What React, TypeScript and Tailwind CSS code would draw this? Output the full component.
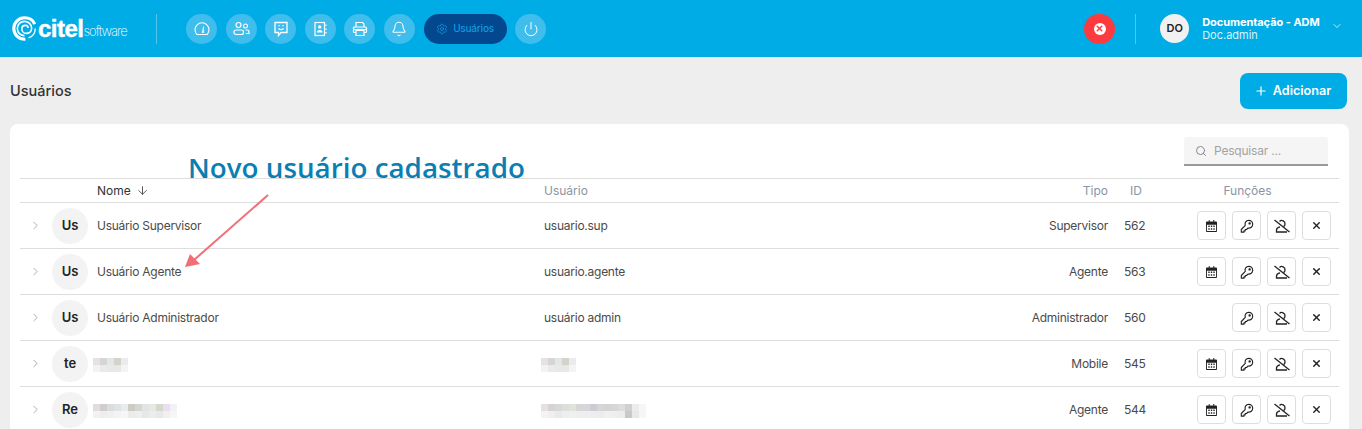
import React from 'react';
import { ArrowDown, Bell, ChevronDown, ChevronRight, Plus, Power, Search, Settings, X } from 'lucide-react';

const Swirl = () => (
  <svg width="25" height="25" viewBox="0 0 28 28" fill="none" stroke="white">
    <path d="M15 26C8 26.500 2 21 2 14S7.500 2 14 2c5 0 9.500 2.500 11.500 7" strokeWidth="3.500" />
    <path d="M26 14c0 5-3 9-7.500 10.500" strokeWidth="1.500" />
    <path d="M14 22c-4.500 0-8-3.500-8-8s3.500-8 8-8 8 3.500 8 7.500-3 6-6 6-5-2.500-5-5 1.500-4 4-4 3 1.500 3 3" strokeWidth="1.800" />
  </svg>
);

const GaugeIcon = () => (
  <svg width="16" height="16" viewBox="0 0 16 16" fill="none" stroke="white" strokeWidth="1.100">
    <path d="M2.800 13.500a7 7 0 1 1 10.400 0z" strokeLinejoin="round" />
    <path d="M8 12L9.500 5.500l.2 6.500" fill="white" strokeWidth="0.500" />
  </svg>
);

const UsersIcon = () => (
  <svg width="17" height="16" viewBox="0 0 17 16" fill="none" stroke="white" strokeWidth="1.200">
    <circle cx="5.500" cy="4" r="2.500" />
    <rect x="1" y="9" width="9.500" height="4.500" rx="2" />
    <circle cx="12.500" cy="5" r="2" />
    <path d="M12.500 9h1.500a2 2 0 0 1 2 2v1.500h-3" />
  </svg>
);

const ChatSmile = () => (
  <svg width="16" height="16" viewBox="0 0 16 16" fill="none" stroke="white" strokeWidth="1.300">
    <path d="M2 1.500h12v10H8l-2.500 3v-3H2z" />
    <path d="M5.500 7.500c1.300 1.300 3.700 1.300 5 0" />
    <path d="M6 4v1.200M10 4v1.200" />
  </svg>
);

const BookIcon = () => (
  <svg width="16" height="16" viewBox="0 0 16 16" fill="none" stroke="white" strokeWidth="1.200">
    <rect x="3" y="1.500" width="9.500" height="13" />
    <path d="M14 3.500v1.500M14 7.500v1.500M14 11v1.500" />
    <circle cx="7.750" cy="6" r="1.700" fill="white" stroke="none" />
    <path d="M5 11.500c0-2 1.200-2.600 2.750-2.600s2.750.6 2.750 2.600z" fill="white" stroke="none" />
  </svg>
);

const PrinterIcon = () => (
  <svg width="16" height="16" viewBox="0 0 16 16" fill="none" stroke="white" strokeWidth="1.200">
    <path d="M4 6V1.500h6.500L12 3v3" />
    <path d="M4 11.500H2.500a1 1 0 0 1-1-1V7a1 1 0 0 1 1-1h11a1 1 0 0 1 1 1v3.500a1 1 0 0 1-1 1H12" />
    <path d="M4 9.500h8v5H4z" />
    <path d="M1.500 8.500h13" />
  </svg>
);

const CalendarIcon = () => (
  <svg width="11" height="12" viewBox="0 0 12 13" fill="#222">
    <path d="M3 0h1v2H3zM8 0h1v2H8z" />
    <path fillRule="evenodd" d="M1 1.500h10a1 1 0 0 1 1 1V12a1 1 0 0 1-1 1H1a1 1 0 0 1-1-1V2.500a1 1 0 0 1 1-1zM1 5v7h10V5z" />
    <path d="M2.500 6h1.500v1.500H2.500zM5.250 6h1.500v1.500h-1.500zM8 6h1.500v1.500H8zM2.500 9h1.500v1.500H2.500zM5.250 9h1.500v1.500h-1.500zM8 9h1.500v1.500H8z" />
  </svg>
);

const KeyIcon = () => (
  <svg width="14" height="14" viewBox="0 0 16 16" fill="none" stroke="#222" strokeWidth="1.300" strokeLinejoin="round">
    <path d="M10 1.500a4.500 4.500 0 0 1 4.500 4.500c0 2.800-2.500 5-5.500 4.300L7.500 12H6v1.500H4.500V15H1.500v-3L6 7.200C5 4.200 7 1.500 10 1.500z" />
    <circle cx="11" cy="5" r="0.700" fill="#222" />
  </svg>
);

const UserOff = () => (
  <svg width="16" height="14" viewBox="0 0 16 14" fill="none" stroke="#222" strokeWidth="1.300">
    <path d="M5.500 2.500A3.200 3.200 0 0 1 11 5c0 1.200-.5 2.100-1.500 2.600" />
    <path d="M6 7.800C4 8.300 2.500 9.300 2.500 11v2h10.500" />
    <path d="M.5 1l15 12" />
  </svg>
);

const navIcons = [
  <GaugeIcon />,
  <UsersIcon />,
  <ChatSmile />,
  <BookIcon />,
  <PrinterIcon />,
  <Bell size={16} strokeWidth={1.6} />,
];

const NavCircle = ({ children }: { children: React.ReactNode }) => (
  <button className="w-[31px] h-[30px] rounded-full bg-[#3fbdec] flex items-center justify-center text-white">
    {children}
  </button>
);

const ActionButton = ({ children }: { children: React.ReactNode }) => (
  <button className="w-[29px] h-[29px] rounded-[4px] border border-[#dddddd] bg-white flex items-center justify-center">
    {children}
  </button>
);

// pixelated blocks that stand in for the blurred names
const Blurred = ({ top, bottom, shift }: { top: string[]; bottom: string[]; shift: string }) => (
  <div className={`flex flex-col mt-[1px] ${shift}`}>
    <div className="flex">
      {top.map((c, i) => <span key={i} className="w-[7px] h-[7px]" style={{ backgroundColor: c }} />)}
    </div>
    <div className="flex">
      {bottom.map((c, i) => <span key={i} className="w-[7px] h-[7px]" style={{ backgroundColor: c }} />)}
    </div>
  </div>
);

const blurShort = {
  top: ['#e6e2e4', '#d6d5d2', '#e2e6e6', '#d3d3ca', '#e8ecec'],
  bottom: ['#f3f2f2', '#e9ebeb', '#e8e9e6', '#e7e8e4', '#f3f5f5'],
};
const blurName = {
  top: ['#e2dce0', '#cfcdd0', '#dcdcdc', '#dfe3e3', '#e8ecec', '#cdccc4', '#d5d6d2', '#e0e4e4', '#e6e8e2', '#d5d8cc', '#e8e0ee', '#f4f0f8'],
  bottom: ['#f3f2f2', '#eeeeee', '#f0f0f0', '#f2f3f3', '#f6f6f6', '#ececea', '#eeeeee', '#e4e8e6', '#ececec', '#e8e8e8', '#f0f0f0', '#f6f6f6'],
};
const blurLogin = {
  top: ['#e6dfe4', '#d6d2d6', '#d8d8d8', '#dcdedc', '#e0e2dc', '#d6d6d6', '#d8d6da', '#ccccd2', '#d6d6d6', '#d4d4d4', '#d6d6d6', '#dcdcdc', '#d0d0d0', '#ececec', '#f6f6f6'],
  bottom: ['#f4f2f2', '#f2eef0', '#e8eaea', '#eeeeee', '#f0f0f0', '#eeeeee', '#eeeeee', '#eeeeee', '#ececec', '#f0f0f0', '#eeeeee', '#ececec', '#c8c8c8', '#e8e8e8', '#f6f6f6'],
};

const rows = [
  { badge: 'Us', name: 'Usuário Supervisor', login: 'usuario.sup', tipo: 'Supervisor', id: '562', agenda: true },
  { badge: 'Us', name: 'Usuário Agente', login: 'usuario.agente', tipo: 'Agente', id: '563', agenda: true },
  { badge: 'Us', name: 'Usuário Administrador', login: 'usuário admin', tipo: 'Administrador', id: '560', agenda: false },
  { badge: 'te', nameBlur: blurShort, loginBlur: blurShort, tipo: 'Mobile', id: '545', agenda: true },
  { badge: 'Re', nameBlur: blurName, loginBlur: blurLogin, tipo: 'Agente', id: '544', agenda: true },
];

export default function App() {
  return (
    <div className="relative w-[1362px] h-[429px] overflow-hidden bg-[#eeeeee] font-['Inter',sans-serif]">
      <header className="h-[57px] bg-[#00ace6] flex items-center text-white">
        <div className="w-[156px] pl-[12px] flex items-center">
          <Swirl />
          <span className="ml-[1px] text-[24px] font-bold tracking-[-0.5px] leading-none font-['Liberation_Sans',sans-serif] [-webkit-text-stroke:0.4px_white]">citel</span>
          <span className="text-[13px] tracking-[-1px] font-extralight leading-none mt-[6px]">software</span>
        </div>
        <div className="w-px h-[30px] bg-[#55c5ec]" />
        <nav className="ml-[29px] flex items-center gap-[8.6px]">
          {navIcons.map((icon, i) => <NavCircle key={i}>{icon}</NavCircle>)}
          <button className="w-[83px] h-[30px] rounded-full bg-[#03478f] flex items-center justify-center gap-[5px] text-[#0f9ae0] text-[10px] font-medium tracking-[-0.2px]">
            <Settings size={12} strokeWidth={1.5} />
            Usuários
          </button>
          <NavCircle><Power size={16} strokeWidth={1.5} /></NavCircle>
        </nav>
        <button className="ml-[538px] w-[31px] h-[30px] rounded-full bg-[#fb3b3f] flex items-center justify-center">
          <span className="w-[12px] h-[12px] rounded-full bg-white flex items-center justify-center">
            <X size={9} strokeWidth={4} className="text-[#fb3b3f]" />
          </span>
        </button>
        <div className="ml-[20px] w-px h-[30px] bg-[#55c5ec]" />
        <div className="ml-[24px] w-[29px] h-[29px] rounded-full bg-[#f1f1f1] flex items-center justify-center text-[#222222] text-[11px] font-semibold">DO</div>
        <div className="ml-[13px] leading-[13px]">
          <div className="text-[11px] font-bold tracking-[-0.05px]">Documentação - ADM</div>
          <div className="text-[11px] text-[#d8f3fc]">Doc.admin</div>
        </div>
        <ChevronDown size={12} strokeWidth={1.5} className="ml-[11px] mb-[5px]" />
      </header>

      <div className="h-[67px] pl-[10px] pr-[15px] flex items-center justify-between">
        <h1 className="text-[14.5px] font-medium text-[#333333] mt-[1px]">Usuários</h1>
        <button className="w-[107px] h-[36px] mt-[1px] rounded-[8px] bg-[#00ace6] text-white text-[12.6px] font-semibold flex items-center justify-center gap-[5px] pr-[2px]">
          <Plus size={14} strokeWidth={2} />
          Adicionar
        </button>
      </div>

      <main className="ml-[10px] w-[1339px] h-[400px] bg-white rounded-[8px] px-[10px] pt-[13px]">
        <div className="flex justify-end pr-[10px] h-[41px]">
          <div className="w-[144px] h-[29px] mr-[1px] bg-[#f5f5f5] rounded-t-[3px] border-b-2 border-[#999999] flex items-center pl-[11px] gap-[7px] text-[#a3a3a3] text-[12px] tracking-[-0.2px]">
            <Search size={12} strokeWidth={2} className="text-[#888888]" />
            Pesquisar ...
          </div>
        </div>

        <div className="h-[25px] border-y border-[#dddddd] grid grid-cols-[77px_447px_564px_16px_73px_141px] items-center text-[12px] text-[#8a94a6]">
          <span />
          <span className="flex items-center gap-[5px] text-[#333333]">Nome <ArrowDown size={13} strokeWidth={1.5} /></span>
          <span className="flex justify-between"><span>Usuário</span><span>Tipo</span></span>
          <span />
          <span className="pl-[6px]">ID</span>
          <span className="text-center pr-[40px]">Funções</span>
        </div>

        {rows.map((row) => (
          <div key={row.id} className="h-[46px] border-b border-[#dddddd] grid grid-cols-[77px_447px_564px_16px_73px_141px] items-center text-[12px] tracking-[-0.25px] text-[#4a4a4a]">
            <div className="flex items-center">
              <ChevronRight size={13} strokeWidth={1.5} className="ml-[9px] text-[#999999]" />
              <div className="ml-[10px] w-[36px] h-[36px] rounded-full bg-[#f3f3f3] flex items-center justify-center text-[#222222] text-[13px] font-semibold tracking-normal">{row.badge}</div>
            </div>
            <div className="pt-[1px]">{row.nameBlur ? <Blurred {...row.nameBlur} shift="-ml-[4px]" /> : row.name}</div>
            <div className="pt-[1px] flex items-center justify-between">
              <span>{row.loginBlur ? <Blurred {...row.loginBlur} shift="-ml-[3px]" /> : row.login}</span>
              <span>{row.tipo}</span>
            </div>
            <span />
            <div className="pt-[1px]">{row.id}</div>
            <div className="flex justify-end gap-[6px] pr-[7px]">
              {row.agenda && <ActionButton><CalendarIcon /></ActionButton>}
              <ActionButton><KeyIcon /></ActionButton>
              <ActionButton><UserOff /></ActionButton>
              <ActionButton><X size={11} strokeWidth={3} className="text-[#222222]" /></ActionButton>
            </div>
          </div>
        ))}
      </main>

      {/* anotacao por cima da tabela */}
      <span className="absolute left-[188px] top-[148px] text-[27.8px] leading-[38px] font-semibold text-[#0b7fb2] font-['Open_Sans',sans-serif]">Novo usuário cadastrado</span>
      <svg className="absolute left-[180px] top-[190px]" width="95" height="85" viewBox="0 0 95 85" fill="none">
        <path d="M88 5L14 70" stroke="#f26d75" strokeWidth="2" />
        <path d="M5 77L10 64l10 10z" fill="#f26d75" />
      </svg>
    </div>
  );
}
